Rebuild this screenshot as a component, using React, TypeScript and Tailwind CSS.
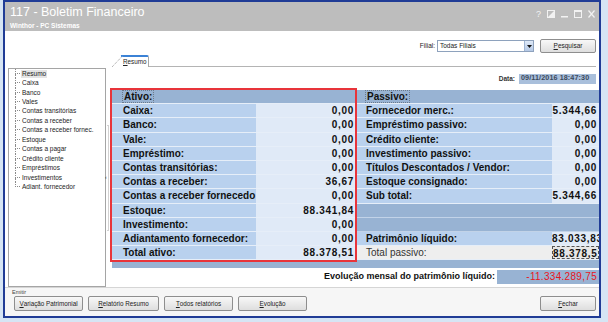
import React from 'react';

type Cell = { label?: string; value?: string; kind?: 'header' | 'empty' | 'plain' };

const ativo: Cell[] = [
  { label: 'Ativo:', kind: 'header' },
  { label: 'Caixa:', value: '0,00' },
  { label: 'Banco:', value: '0,00' },
  { label: 'Vale:', value: '0,00' },
  { label: 'Empréstimo:', value: '0,00' },
  { label: 'Contas transitórias:', value: '0,00' },
  { label: 'Contas a receber:', value: '36,67' },
  { label: 'Contas a receber fornecedo', value: '0,00' },
  { label: 'Estoque:', value: '88.341,84' },
  { label: 'Investimento:', value: '0,00' },
  { label: 'Adiantamento fornecedor:', value: '0,00' },
  { label: 'Total ativo:', value: '88.378,51' },
];

const passivo: Cell[] = [
  { label: 'Passivo:', kind: 'header' },
  { label: 'Fornecedor merc.:', value: '5.344,66' },
  { label: 'Empréstimo passivo:', value: '0,00' },
  { label: 'Crédito cliente:', value: '0,00' },
  { label: 'Investimento passivo:', value: '0,00' },
  { label: 'Títulos Descontados / Vendor:', value: '0,00' },
  { label: 'Estoque consignado:', value: '0,00' },
  { label: 'Sub total:', value: '5.344,66' },
  { kind: 'empty' },
  { kind: 'empty' },
  { label: 'Patrimônio líquido:', value: '83.033,83' },
  { label: 'Total passivo:', value: '88.378,51', kind: 'plain' },
];

const treeItems = [
  'Resumo',
  'Caixa',
  'Banco',
  'Vales',
  'Contas transitórias',
  'Contas a receber',
  'Contas a receber fornec.',
  'Estoque',
  'Contas a pagar',
  'Crédito cliente',
  'Empréstimos',
  'Investimentos',
  'Adiant. fornecedor',
];

const GridRow = ({ row, labelW, pl }: { row: Cell; labelW: string; pl: string }) => {
  if (row.kind === 'header') {
    return (
      <div className="flex h-[14.2px] border-b border-[#e6eef8] bg-[#98b3d3]">
        <div className={`${pl} flex items-center`}>
          <span className="outline outline-1 outline-dotted outline-[#6b7a8c] px-[1px] text-[10px] leading-[11px] font-bold text-[#111]">
            {row.label}
          </span>
        </div>
      </div>
    );
  }
  if (row.kind === 'empty') {
    return <div className="h-[14.2px] border-b border-[#c2d3e8] bg-[#98b3d3]" />;
  }
  const plain = row.kind === 'plain';
  return (
    <div className="flex h-[14.2px] border-b border-[#e6eef8] min-w-0">
      <div
        className={`${labelW} shrink-0 ${pl} flex items-center overflow-hidden whitespace-nowrap text-[10px] ${
          plain ? 'bg-[#eeeeee] font-normal text-[#333]' : 'bg-[#b9d1ee] font-bold text-[#111]'
        }`}
      >
        {row.label}
      </div>
      <div
        className={`flex-1 min-w-0 overflow-hidden whitespace-nowrap text-right pr-[2px] text-[10px] leading-[13px] font-bold tracking-[0.7px] text-[#111] ${
          plain ? 'bg-[#e6e6e6] border border-dashed border-[#555] leading-[11px]' : 'bg-[#e0eaf7]'
        }`}
      >
        {row.value}
      </div>
    </div>
  );
};

const Btn = ({ w, first, rest }: { w: string; first: string; rest: string }) => (
  <button
    className={`${w} h-[15px] rounded-[2px] border border-[#8e8e8e] bg-gradient-to-b from-[#f8f8f8] to-[#dedede] text-[6.3px] text-[#222] flex items-center justify-center`}
  >
    <span className="underline">{first}</span>
    {rest}
  </button>
);

export default function App() {
  return (
    <div className="w-[608px] h-[322px] bg-[#d6e5f4] pl-[3px] overflow-hidden font-['Liberation_Sans',Arial,sans-serif]">
      <div className="w-[598px] h-[318px] border-2 border-[#203c96] bg-white flex flex-col">
        {/* title bar */}
        <div className="h-[29px] shrink-0 bg-[#bdbdbd] flex items-start justify-between pl-[5px] pr-[4px]">
          <div className="flex flex-col pt-[3px]">
            <span className="text-[12.5px] leading-[14px] text-white">117 - Boletim Financeiro</span>
            <span className="mt-[3px] text-[6.5px] leading-[8px] font-bold text-white">Winthor - PC Sistemas</span>
          </div>
          <div className="flex items-center gap-[6px] pt-[7px] text-[#f2f2f2]">
            <span className="text-[9px] leading-[10px]">?</span>
            <svg width="8" height="8" viewBox="0 0 8 8">
              <rect x="0.5" y="0.5" width="7" height="7" fill="none" stroke="#f2f2f2" />
              <path d="M1 7 L7 1 L7 7 Z" fill="#f2f2f2" />
            </svg>
            <svg width="7" height="8" viewBox="0 0 7 8">
              <rect x="0" y="6" width="7" height="1.5" fill="#f2f2f2" />
            </svg>
            <svg width="8" height="8" viewBox="0 0 8 8">
              <rect x="0.5" y="0.5" width="7" height="7" fill="none" stroke="#f2f2f2" />
              <rect x="0.5" y="0.5" width="7" height="1.5" fill="#f2f2f2" />
            </svg>
            <svg width="7" height="8" viewBox="0 0 7 8">
              <path d="M0.5 0.5 L6.5 7.5 M6.5 0.5 L0.5 7.5" stroke="#f2f2f2" strokeWidth="1.2" />
            </svg>
          </div>
        </div>

        {/* filial row */}
        <div className="mt-[8px] h-[14px] flex items-center justify-end pr-[3px]">
          <span className="text-[6.5px] text-[#222] mr-[2px]">Filial:</span>
          <div className="w-[97px] h-[12px] border border-[#8ea2bd] bg-white flex items-center">
            <span className="pl-[2px] text-[6.5px] text-[#222]">Todas Filiais</span>
            <div className="ml-auto w-[9px] h-full bg-gradient-to-b from-[#dfe9f7] to-[#b5c9e6] border-l border-[#9fb4d2] flex items-center justify-center">
              <svg width="5" height="3" viewBox="0 0 5 3">
                <path d="M0 0 H5 L2.5 3 Z" fill="#111" />
              </svg>
            </div>
          </div>
          <button className="ml-[6px] w-[56px] h-[14px] rounded-[2px] border border-[#8e8e8e] bg-gradient-to-b from-[#f8f8f8] to-[#dedede] text-[6.5px] text-[#222]">
            <span className="underline">P</span>esquisar
          </button>
        </div>

        {/* tab row */}
        <div className="mt-[2px] h-[12px] flex items-end">
          <div className="w-[107px] shrink-0" />
          <svg width="11" height="12" viewBox="0 0 11 12" className="shrink-0">
            <path d="M0 12 L10 1.5" stroke="#9a9a9a" strokeDasharray="1 1" />
            <path d="M9 1 L11 0.8" stroke="#3b82d6" strokeWidth="2" />
          </svg>
          <div className="w-[26px] shrink-0 h-[12px] border-t-2 border-[#3b82d6] border-r border-r-[#a8a8a8] rounded-tr-[2px] flex items-start pt-[1px]">
            <span className="text-[6.3px] leading-[7px] text-[#222]">
              <span className="underline">R</span>esumo
            </span>
          </div>
          <div className="flex-1 mr-[3px] border-b border-[#b4b4b4] h-[12px]" />
        </div>

        {/* main */}
        <div className="mt-[1px] h-[219px] flex">
          {/* tree */}
          <div className="ml-[3px] w-[98px] shrink-0 h-full border border-[#a5a5a5] bg-white pl-[6px] flex flex-col">
            {treeItems.map((t, i) => (
              <div key={t} className="h-[9.45px] flex items-stretch">
                <div className="w-[5px] flex flex-col">
                  <div className="h-1/2 border-l border-b border-dotted border-[#8a8a8a]" />
                  <div className={`h-1/2 ${i < treeItems.length - 1 ? 'border-l border-dotted border-[#8a8a8a]' : ''}`} />
                </div>
                <div className="flex items-center ml-[1px]">
                  <span
                    className={`text-[6.5px] leading-[8px] whitespace-nowrap text-[#1c1c1c] px-[1px] ${i === 0 ? 'bg-[#e4e4e4]' : ''}`}
                  >
                    {t}
                  </span>
                </div>
              </div>
            ))}
          </div>

          {/* splitter */}
          <div className="w-[4px] shrink-0 flex items-center justify-center">
            <div className="h-[106px] w-[2px] border border-[#d2d2d2] border-l-0 flex items-center">
              <span className="text-[5px] leading-[5px] text-[#333] -ml-[2px]">‹</span>
            </div>
          </div>

          {/* right pane */}
          <div className="flex-1 min-w-0 flex flex-col">
            <div className="mt-[5px] h-[11px] flex items-center justify-end pr-[3px]">
              <span className="text-[6.5px] font-bold text-[#333] mr-[4px]">Data:</span>
              <div className="w-[77px] h-[10px] bg-[#a9bfdb] flex items-center pl-[2px]">
                <span className="text-[7.2px] font-bold text-[#3c4a5c] tracking-[0.1px]">09/11/2016 18:47:30</span>
              </div>
            </div>

            <div className="mt-[4px] relative pl-[2px] pt-[2px]">
              <div className="flex bg-[#98b3d3] pb-[7.6px]">
                <div className="w-[244px] shrink-0 flex flex-col">
                  {ativo.map((r, i) => (
                    <GridRow key={i} row={r} labelW="w-[144px]" pl="pl-[11px]" />
                  ))}
                </div>
                <div className="flex-1 min-w-0 flex flex-col">
                  {passivo.map((r, i) => (
                    <GridRow key={i} row={r} labelW="w-[196px]" pl="pl-[10px]" />
                  ))}
                </div>
              </div>
              {/* annotation outline */}
              <div className="absolute left-0 top-0 w-[247px] h-[174px] border-2 border-[#e8343a] pointer-events-none" />
            </div>

            <div className="mt-[2px] h-[14px] flex items-center justify-end">
              <span className="text-[9px] font-bold text-[#111] mr-[2px]">Evolução mensal do patrimônio líquido:</span>
              <div className="w-[102px] h-full bg-[#98b3d3] flex items-center justify-end pr-[2px]">
                <span className="text-[10px] text-[#e8151c] tracking-[0.3px]">-11.334.289,75</span>
              </div>
            </div>
          </div>
        </div>

        {/* bottom */}
        <div className="flex-1 border-t border-[#d5d5d5] bg-[#f6f6f6] flex flex-col">
          <span className="mt-[1px] pl-[7px] text-[5.5px] leading-[7px] text-[#444]">Emitir</span>
          <div className="flex items-center gap-[5px] pl-[9px] pr-[3px]">
            <Btn w="w-[69px]" first="V" rest="ariação Patrimonial" />
            <Btn w="w-[71px]" first="R" rest="elatório Resumo" />
            <Btn w="w-[69px]" first="T" rest="odos relatórios" />
            <Btn w="w-[69px]" first="E" rest="volução" />
            <div className="ml-auto">
              <Btn w="w-[56px]" first="F" rest="echar" />
            </div>
          </div>
        </div>
      </div>
    </div>
  );
}
